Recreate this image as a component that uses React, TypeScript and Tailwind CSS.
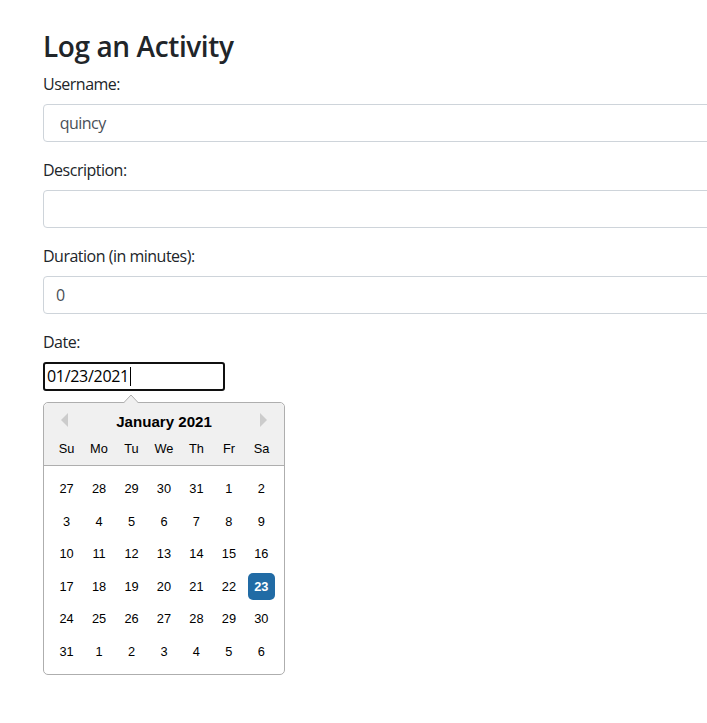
import React from 'react';

const weeks: number[][] = [
  [27, 28, 29, 30, 31, 1, 2],
  [3, 4, 5, 6, 7, 8, 9],
  [10, 11, 12, 13, 14, 15, 16],
  [17, 18, 19, 20, 21, 22, 23],
  [24, 25, 26, 27, 28, 29, 30],
  [31, 1, 2, 3, 4, 5, 6],
];

const dayNames = ['Su', 'Mo', 'Tu', 'We', 'Th', 'Fr', 'Sa'];

function Field({ label, value }: { label: string; value: string }) {
  return (
    <div className="mb-4">
      <label className="block mb-2">{label}</label>
      <div className="w-[720px] h-[38px] border border-[#ced4da] rounded-[4px] px-3 flex items-center text-[#495057] whitespace-pre">
        {value}
      </div>
    </div>
  );
}

function DatePicker() {
  return (
    <div className="relative mt-[11px] w-[242px] border border-[#aeaeae] rounded-[5px] bg-white font-['Liberation_Sans',Arial,sans-serif] text-[12.8px] tracking-normal text-black">
      {/* popper arrow */}
      <svg className="absolute left-[78px] top-[-9px]" width="18" height="10" viewBox="0 0 18 10">
        <polygon points="1,9.5 9,1 17,9.5" fill="#f0f0f0" stroke="#aeaeae" strokeWidth="1" />
        <rect x="0" y="9.5" width="18" height="1" fill="#f0f0f0" />
      </svg>

      <div className="relative bg-[#f0f0f0] border-b border-[#aeaeae] rounded-t-[5px] pt-2 text-center">
        {/* navigation triangles */}
        <span className="absolute top-[10px] left-[10px] w-0 h-0 border-[7.2px] border-transparent border-r-[#ccc]" />
        <span className="absolute top-[10px] right-[10px] w-0 h-0 border-[7.2px] border-transparent border-l-[#ccc]" />
        <div className="font-bold text-[15.1px] leading-[22px]">January 2021</div>
        <div className="flex justify-center">
          {dayNames.map((d) => (
            <div key={d} className="w-[27.2px] h-[27.2px] leading-[27.2px] m-[2.66px] text-center text-black">
              {d}
            </div>
          ))}
        </div>
      </div>

      <div className="m-[6.4px]">
        {weeks.map((week, wi) => (
          <div key={wi} className="flex">
            {week.map((day, di) => {
              const selected = wi === 3 && di === 6;
              return (
                <div
                  key={di}
                  className={
                    selected
                      ? 'w-[27.2px] h-[27.2px] leading-[27.2px] m-[2.66px] text-center rounded-[5px] bg-[#216ba5] text-white font-bold'
                      : 'w-[27.2px] h-[27.2px] leading-[27.2px] m-[2.66px] text-center'
                  }
                >
                  {day}
                </div>
              );
            })}
          </div>
        ))}
      </div>
    </div>
  );
}

export default function App() {
  return (
    <div className="w-full min-h-screen overflow-hidden bg-white text-[#212529] text-base leading-6 tracking-[-0.5px] font-['Open_Sans',sans-serif]">
      <div className="pl-[43px] pt-[30px]">
        <h3 className="text-[28px] leading-[1.2] font-semibold tracking-[-0.4px] mb-2">Log an Activity</h3>
        <Field label="Username:" value=" quincy" />
        <Field label="Description:" value="" />
        <Field label="Duration (in minutes):" value="0" />
        <div className="mb-4">
          <label className="block mb-2">Date:</label>
          <div className="w-[182px] h-[29px] border-2 border-[#101010] rounded-[3px] px-[2px] flex items-center text-black tracking-[-0.3px]">
            <span>01/23/2021</span>
            <span className="inline-block w-px h-[19px] bg-black ml-px" />
          </div>
          <DatePicker />
        </div>
      </div>
    </div>
  );
}
